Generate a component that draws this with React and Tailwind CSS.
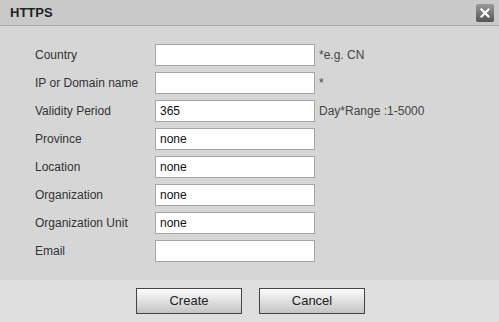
export default function App() {
  const rows = [
    { label: "Country", value: "", hint: "*e.g. CN" },
    { label: "IP or Domain name", value: "", hint: "*" },
    { label: "Validity Period", value: "365", hint: "Day*Range :1-5000" },
    { label: "Province", value: "none", hint: "" },
    { label: "Location", value: "none", hint: "" },
    { label: "Organization", value: "none", hint: "" },
    { label: "Organization Unit", value: "none", hint: "" },
    { label: "Email", value: "", hint: "" },
  ];
  return (
    <div className="w-[499px] h-[322px] flex flex-col bg-[#d6d6d6] text-[12px] text-[#333]" style={{ fontFamily: '"Liberation Sans", Arial, sans-serif' }}>
      <div className="h-[26px] flex items-center justify-between pl-[10px] pr-[5px] bg-[#c9c9c9] border-b border-[#a9a9a9]">
        <span className="font-bold text-[13px] text-[#222]">HTTPS</span>
        <div className="w-[18px] h-[18px] rounded-[2px] bg-gradient-to-b from-[#9a9a9a] to-[#555] flex items-center justify-center">
          <svg width="10" height="10" viewBox="0 0 10 10">
            <path d="M1.5 1.5 L8.5 8.5 M8.5 1.5 L1.5 8.5" stroke="white" strokeWidth="2.2" strokeLinecap="square" />
          </svg>
        </div>
      </div>
      <div className="flex-1 flex flex-col gap-[6px] pt-[18px] pl-[35px]">
        {rows.map((r) => (
          <div key={r.label} className="flex items-center h-[22px]">
            <span className="w-[120px]">{r.label}</span>
            <div className="w-[160px] h-[22px] bg-white border border-[#a5a5a5] flex items-center pl-[4px] text-[12px] text-[#111]">{r.value}</div>
            <span className="ml-[4px] text-[#444]">{r.hint}</span>
          </div>
        ))}
      </div>
      <div className="h-[42px] bg-[#dedede] flex items-start justify-center gap-[17px] pt-[8px] pl-[2px]">
        {["Create", "Cancel"].map((b) => (
          <div key={b} className="w-[106px] h-[26px] border border-[#444] bg-gradient-to-b from-[#fdfdfd] to-[#c4c4c4] flex items-center justify-center text-[13px] text-[#222]">{b}</div>
        ))}
      </div>
    </div>
  );
}
